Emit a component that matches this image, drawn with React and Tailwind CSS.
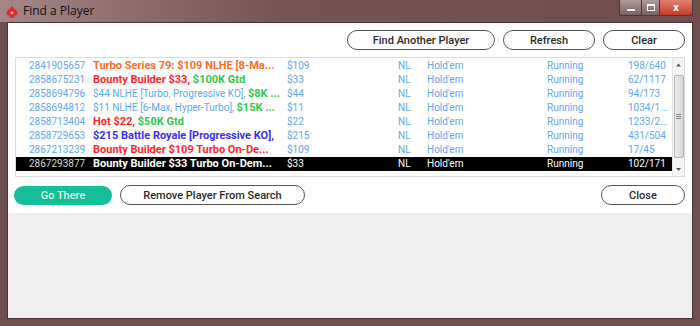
const rows = [
  { id: '2841905657', name: [{ t: 'Turbo Series 79: $109 NLHE [8-Ma...', c: 'text-[#ff6a24] font-bold text-[11px]' }], buy: '$109', entries: '198/640' },
  { id: '2858675231', name: [{ t: 'Bounty Builder $33, ', c: 'text-[#ff2626] font-bold text-[11px]' }, { t: '$100K Gtd', c: 'text-[#2fc94f] font-bold text-[11px]' }], buy: '$33', entries: '62/1117' },
  { id: '2858694796', name: [{ t: '$44 NLHE [Turbo, Progressive KO], ', c: 'text-[#62a6f2]' }, { t: '$8K ...', c: 'text-[#2fc94f] font-bold text-[11px]' }], buy: '$44', entries: '94/173' },
  { id: '2858694812', name: [{ t: '$11 NLHE [6-Max, Hyper-Turbo], ', c: 'text-[#62a6f2]' }, { t: '$15K ...', c: 'text-[#2fc94f] font-bold text-[11px]' }], buy: '$11', entries: '1034/1...' },
  { id: '2858713404', name: [{ t: 'Hot $22, ', c: 'text-[#ff2626] font-bold text-[11px]' }, { t: '$50K Gtd', c: 'text-[#2fc94f] font-bold text-[11px]' }], buy: '$22', entries: '1233/2...' },
  { id: '2858729653', name: [{ t: '$215 Battle Royale [Progressive KO],', c: 'text-[#3a2ff2] font-bold text-[11px]' }], buy: '$215', entries: '431/504' },
  { id: '2867213239', name: [{ t: 'Bounty Builder $109 Turbo On-De...', c: 'text-[#ff2626] font-bold text-[11px]' }], buy: '$109', entries: '17/45' },
  { id: '2867293877', name: [{ t: 'Bounty Builder $33 Turbo On-Dem...', c: 'text-white font-bold text-[11px]' }], buy: '$33', entries: '102/171', selected: true },
]

function PillButton({ children, className = '' }) {
  return (
    <button
      className={`h-[20px] rounded-full border border-[#555] bg-white text-[11px] font-medium text-[#2a2a2a] leading-none ${className}`}
    >
      {children}
    </button>
  )
}

function Row({ row }) {
  const sel = row.selected
  const base = sel ? 'text-white' : 'text-[#62a6f2]'
  return (
    <div className={`flex h-[14px] items-center whitespace-nowrap text-[10px] leading-[14px] ${sel ? 'bg-black' : ''}`}>
      <span className={`w-[77px] pl-[13px] ${sel ? 'text-[#d8d8d8]' : 'text-[#62a6f2]'}`}>{row.id}</span>
      <span className="h-[14px] w-[194px] overflow-hidden leading-[14px]">
        {row.name.map((n, i) => (
          <span key={i} className={n.c}>{n.t}</span>
        ))}
      </span>
      <span className={`w-[111px] ${base}`}>{row.buy}</span>
      <span className={`w-[29px] ${base}`}>NL</span>
      <span className={`w-[120px] ${base}`}>Hold'em</span>
      <span className={`w-[81px] ${base}`}>Running</span>
      <span className={`flex-1 ${base}`}>{row.entries}</span>
    </div>
  )
}

function Scrollbar() {
  return (
    <div className="flex w-[12px] flex-col items-center border-l border-[#e4e4e4] bg-[#f4f4f4]">
      <svg width="7" height="12" viewBox="0 0 7 12" className="mt-[1px]">
        <path d="M1 7.5 L3.5 4.5 L6 7.5 Z" fill="#555" />
      </svg>
      <div className="mt-[4px] flex h-[83px] w-[10px] flex-col items-center justify-center gap-[1px] rounded-[2px] border border-[#b4b4b4] bg-gradient-to-r from-[#ececec] to-[#d6d6d6]">
        <div className="h-px w-[5px] bg-[#888]" />
        <div className="h-px w-[5px] bg-[#888]" />
        <div className="h-px w-[5px] bg-[#888]" />
      </div>
      <div className="flex-1" />
      <svg width="7" height="10" viewBox="0 0 7 10" className="mb-[1px]">
        <path d="M1 3 L6 3 L3.5 6 Z" fill="#555" />
      </svg>
    </div>
  )
}

export default function App() {
  return (
    <div className="relative flex h-[326px] w-[700px] flex-col bg-[#6f5050] font-['Roboto',sans-serif]">
      {/* Title bar */}
      <div className="flex h-[22px] items-center bg-[linear-gradient(90deg,#a48888_0%,#8e6d6d_18%,#755454_40%,#6e4d4d_100%)]">
        <svg width="14" height="14" viewBox="0 0 14 14" className="ml-[5px] mt-[1px]">
          <path d="M7 1 C9 4 12.5 5.5 12.5 8.3 C12.5 10.2 10.6 11.2 8.8 10.2 L9.6 12.8 L4.4 12.8 L5.2 10.2 C3.4 11.2 1.5 10.2 1.5 8.3 C1.5 5.5 5 4 7 1 Z" fill="#e8252a" />
          <circle cx="7" cy="8" r="1.4" fill="#fff" opacity="0.8" />
        </svg>
        <span className="ml-[4px] text-[12px] text-[#111] font-['Open_Sans',sans-serif] leading-none">Find a Player</span>
        <div className="flex-1" />
        <div className="mr-[7px] flex self-start">
          <div className="flex h-[16px] w-[23px] items-center justify-center rounded-bl-[3px] border border-t-0 border-[#4f3636] bg-gradient-to-b from-[#b09a9a] to-[#7e6262]">
            <div className="mt-[4px] h-[2px] w-[8px] bg-white shadow-[0_0_1px_#333]" />
          </div>
          <div className="flex h-[16px] w-[18px] items-center justify-center border border-l-0 border-t-0 border-[#4f3636] bg-gradient-to-b from-[#b09a9a] to-[#7e6262]">
            <div className="h-[7px] w-[8px] border border-t-2 border-white" />
          </div>
          <div className="flex h-[16px] w-[33px] items-center justify-center rounded-br-[3px] border border-l-0 border-t-0 border-[#4f3636] bg-gradient-to-b from-[#e08070] to-[#c2392a] text-[11px] font-bold text-white leading-none">
            x
          </div>
        </div>
      </div>

      {/* Client area */}
      <div className="mx-[7px] mb-[7px] flex flex-1 flex-col border border-[#4a3434] bg-[#efefef]">
        <div className="flex h-[190px] flex-col bg-white">
          <div className="flex justify-end gap-[8px] pr-[7px] pt-[7px]">
            <PillButton className="w-[148px]">Find Another Player</PillButton>
            <PillButton className="w-[92px]">Refresh</PillButton>
            <PillButton className="w-[82px]">Clear</PillButton>
          </div>

          <div className="mx-[7px] mt-[7px] flex h-[120px] border border-[#dcdcdc]">
            <div className="flex-1 pt-[1px]">
              {rows.map(r => (
                <Row key={r.id} row={r} />
              ))}
            </div>
            <Scrollbar />
          </div>

          <div className="flex items-center pl-[6px] pr-[7px] pt-[8px]">
            <button className="h-[19px] w-[98px] rounded-full bg-[#14bf97] text-[11px] font-medium text-[#dff6ef] leading-none">
              Go There
            </button>
            <PillButton className="ml-[8px] w-[185px]">Remove Player From Search</PillButton>
            <div className="flex-1" />
            <PillButton className="w-[84px]">Close</PillButton>
          </div>
        </div>
      </div>
    </div>
  )
}
